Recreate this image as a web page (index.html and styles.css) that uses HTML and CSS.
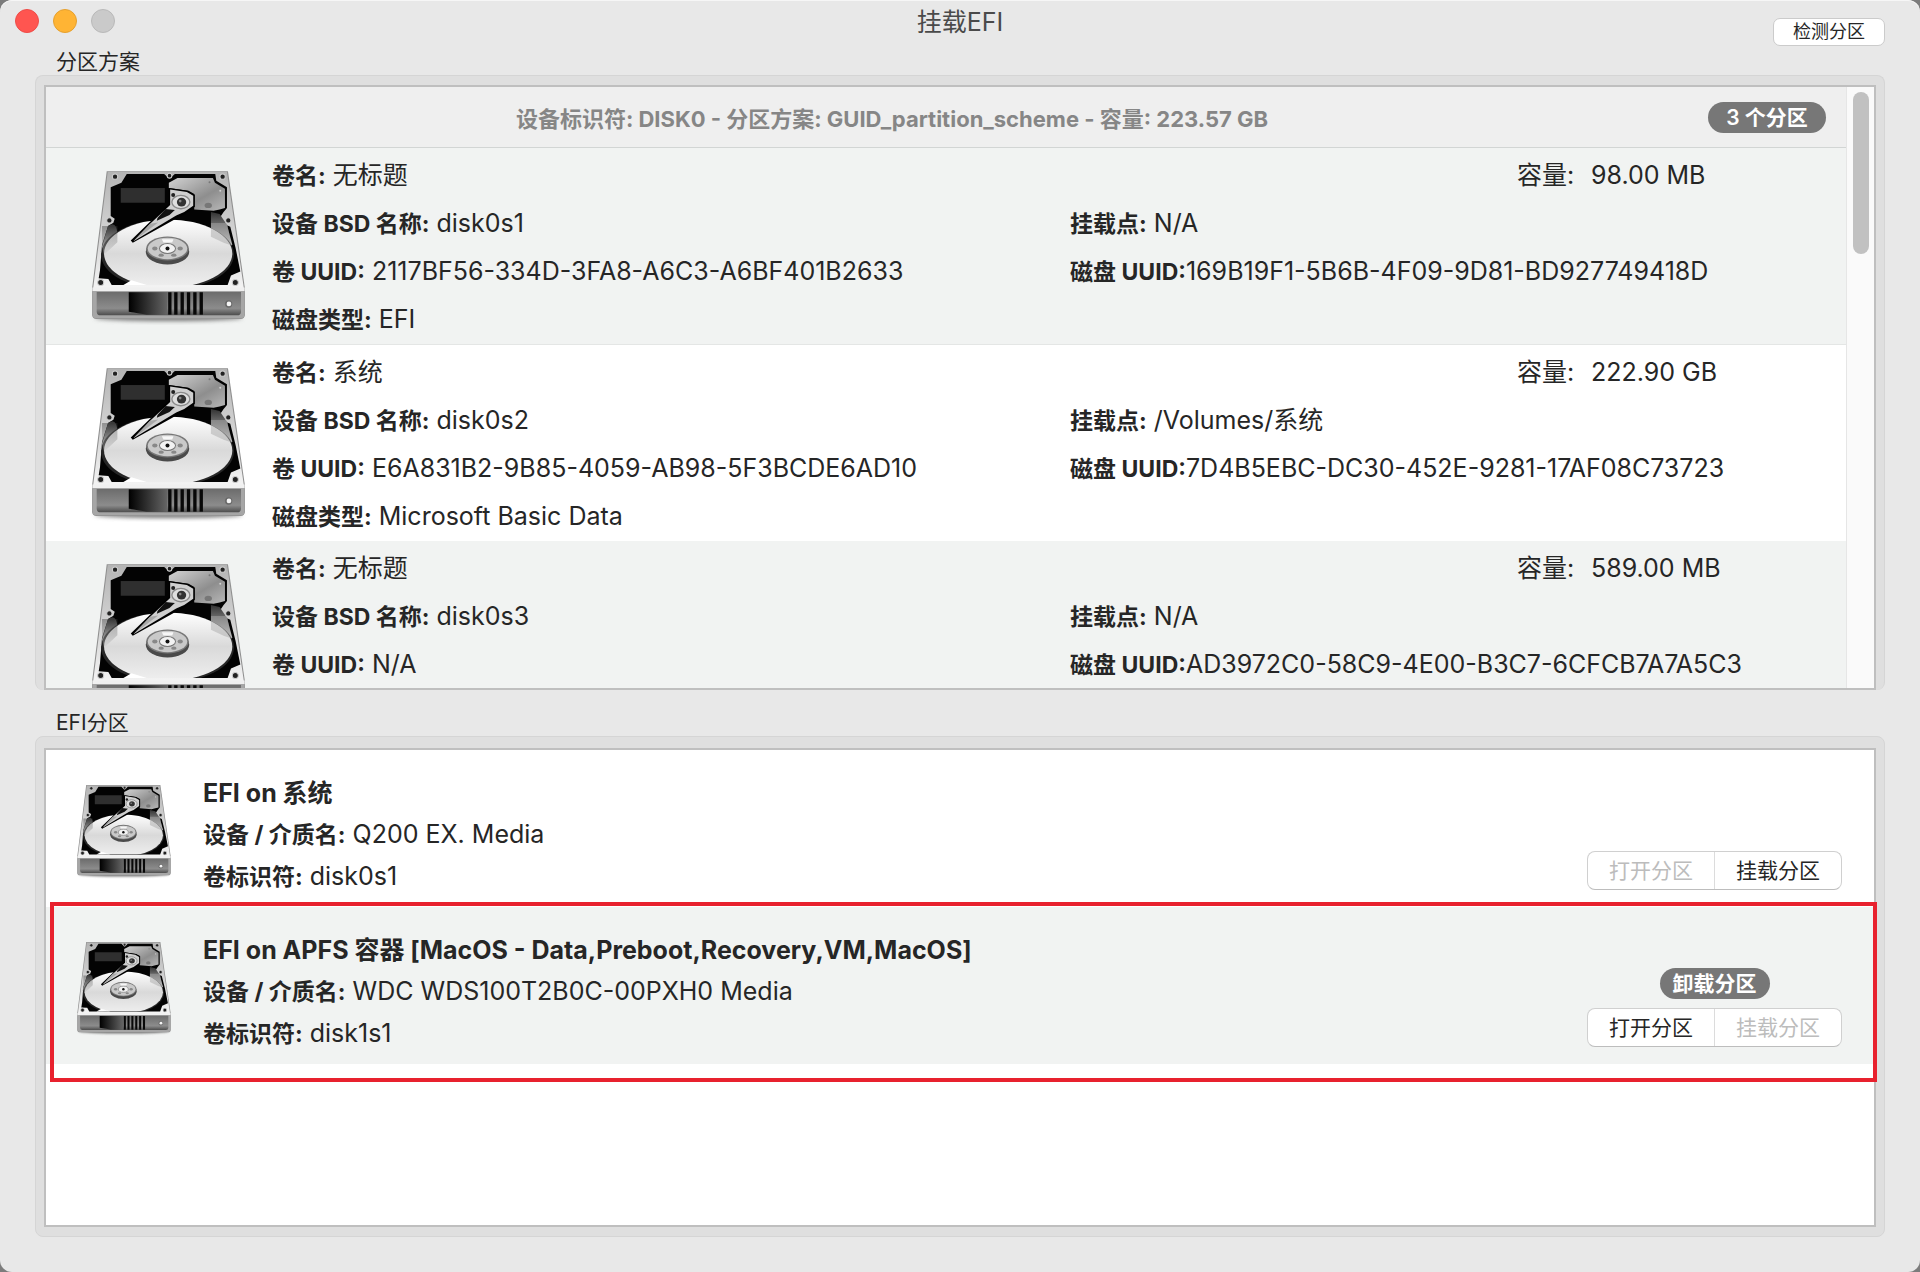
FILE: index.html
```html
<!DOCTYPE html>
<html lang="zh-CN">
<head>
  <meta charset="UTF-8">
  <meta name="viewport" content="width=device-width, initial-scale=1.0">
  <title>挂载EFI</title>
  <link rel="stylesheet" href="styles.css">
</head>
<body>

<!-- hard drive icon, shared by both lists -->
<svg class="defs" aria-hidden="true">
  <defs>
    <linearGradient id="case" x1="0" y1="0" x2="0" y2="1">
      <stop offset="0" stop-color="#b4b4b4"/>
      <stop offset="0.6" stop-color="#d8d8d8"/>
      <stop offset="1" stop-color="#f4f4f4"/>
    </linearGradient>
    <linearGradient id="front" x1="0" y1="0" x2="0" y2="1">
      <stop offset="0" stop-color="#6c6c6c"/>
      <stop offset="0.7" stop-color="#8c8c8c"/>
      <stop offset="1" stop-color="#4c4c4c"/>
    </linearGradient>
    <linearGradient id="plate" x1="0" y1="0" x2="1" y2="1">
      <stop offset="0" stop-color="#d2d2d2"/>
      <stop offset="0.6" stop-color="#8e8e8e"/>
      <stop offset="1" stop-color="#b8b8b8"/>
    </linearGradient>
    <linearGradient id="platter" x1="0" y1="0" x2="0" y2="1">
      <stop offset="0" stop-color="#ffffff"/>
      <stop offset="0.5" stop-color="#d9d9d9"/>
      <stop offset="1" stop-color="#efefef"/>
    </linearGradient>
    <linearGradient id="slot" x1="0" y1="0" x2="1" y2="0">
      <stop offset="0" stop-color="#000000"/>
      <stop offset="1" stop-color="#666666"/>
    </linearGradient>
    <linearGradient id="shade" x1="0" y1="0" x2="0" y2="1">
      <stop offset="0" stop-color="#333333"/>
      <stop offset="1" stop-color="#d0d0d0"/>
    </linearGradient>
    <filter id="soft" x="-10%" y="-100%" width="120%" height="300%">
      <feGaussianBlur stdDeviation="6"/>
    </filter>
    <clipPath id="well">
      <path d="M140 58H252L268 72L284 58H405L408 78L440 98V170L450 205L466 280L480 362L452 366L442 390H95L85 372L56 370L66 270L84 214L100 200L92 184V98Z"/>
    </clipPath>
    <symbol id="drive" viewBox="30 40 470 470">
      <ellipse cx="265" cy="488" rx="220" ry="10" fill="#777777" filter="url(#soft)"/>
      <path d="M80 50H443L494 402V478Q494 492 480 492H50Q36 492 36 478V402Z" fill="#8f8f8f"/>
      <path d="M83 52H440L491 403H39Z" fill="url(#case)"/>
      <path d="M140 58H252L268 72L284 58H405L408 78L440 98V160L430 172L418 190L428 206L450 216L466 280L480 350L452 362L442 390H95L85 372L56 370L60 345L66 270L84 214L100 204L104 192L92 184V98L124 84Z" fill="#030303"/>
      <rect x="122" y="100" width="132" height="44" fill="#2f2f2f"/>
      <path d="M292 70H398L404 84L434 102V160L418 164L400 168L342 164V118L325 108L266 100V84Z" fill="url(#plate)"/>
      <ellipse cx="384" cy="152" rx="11" ry="8" fill="#777777"/>
      <circle cx="388" cy="83" r="3" fill="#777777"/>
      <circle cx="420" cy="108" r="3" fill="#d0d0d0"/>
      <path d="M392 172L418 178L440 210L456 270L448 275L392 245Z" fill="url(#shade)"/>
      <path d="M84 214Q110 195 112 240L110 262L72 305L62 290Z" fill="url(#shade)"/>
      <g clip-path="url(#well)">
        <ellipse cx="262" cy="299" rx="199" ry="105" fill="#262626"/>
        <ellipse cx="264" cy="296" rx="192" ry="102" fill="url(#platter)"/>
      </g>
      <path d="M66 214H112V262L72 300L66 275Z" fill="url(#shade)" opacity="0.4"/>
      <path d="M392 205H440L454 272L430 264L392 246Z" fill="#aaaaaa" opacity="0.5"/>
      <!-- spindle -->
      <ellipse cx="262" cy="291" rx="65" ry="38" fill="#4a4a4a"/>
      <ellipse cx="262" cy="281" rx="64" ry="36" fill="#777777"/>
      <ellipse cx="262" cy="281" rx="59" ry="32" fill="#c9c9c9"/>
      <ellipse cx="262" cy="281" rx="24" ry="15" fill="#f2f2f2" stroke="#777777" stroke-width="3"/>
      <circle cx="262" cy="281" r="6" fill="#111111"/>
      <g fill="#888888">
        <ellipse cx="224" cy="281" rx="8" ry="6"/>
        <ellipse cx="300" cy="281" rx="8" ry="6"/>
        <ellipse cx="243" cy="301" rx="8" ry="5"/>
        <ellipse cx="281" cy="301" rx="8" ry="5"/>
      </g>
      <path d="M245 253H280L276 263H250Z" fill="#f7f7f7"/>
      <!-- arm -->
      <path d="M266 100L322 108L344 120V156L316 178L294 188L158 264L152 257L206 205L266 148Z" fill="#000000"/>
      <path d="M270 104L320 112L339 123V153L312 172L288 182L160 259L210 207L270 151Z" fill="#cfcfcf"/>
      <path d="M232 190L256 163L284 166L268 181L230 198Z" fill="#111111"/>
      <path d="M160 259L210 207L234 203Z" fill="#a8a8a8"/>
      <ellipse cx="302" cy="142" rx="27" ry="20" fill="#dedede" stroke="#8a8a8a" stroke-width="4"/>
      <ellipse cx="304" cy="142" rx="14" ry="13" fill="#333333"/>
      <circle cx="279" cy="121" r="6" fill="#222222"/>
      <circle cx="300" cy="139" r="4" fill="#888888"/>
      <!-- screws -->
      <g fill="#222222" stroke="#cfcfcf" stroke-width="3">
        <circle cx="105" cy="66" r="8"/>
        <circle cx="268" cy="63" r="7"/>
        <circle cx="427" cy="66" r="8"/>
        <circle cx="88" cy="197" r="8"/>
        <circle cx="444" cy="197" r="8"/>
        <circle cx="62" cy="383" r="9"/>
        <circle cx="465" cy="383" r="9"/>
      </g>
      <path d="M130 390L154 376L200 390Z" fill="#ffffff"/>
      <!-- front side -->
      <path d="M37 398H493V409H37Z" fill="#f0f0f0"/>
      <path d="M37 409H493V477Q493 490 480 490H50Q37 490 37 477Z" fill="#a6a6a6"/>
      <path d="M50 411H482V470Q482 481 470 481H62Q50 481 50 470Z" fill="url(#front)"/>
      <path d="M146 412H262V479H200Q150 470 146 470Z" fill="url(#slot)"/>
      <g fill="#080808">
        <rect x="264" y="412" width="10" height="67"/>
        <rect x="282" y="412" width="10" height="67"/>
        <rect x="301" y="412" width="10" height="67"/>
        <rect x="320" y="412" width="10" height="67"/>
        <rect x="339" y="412" width="10" height="67"/>
        <rect x="358" y="412" width="10" height="67"/>
      </g>
      <circle cx="445" cy="447" r="11" fill="#6a6a6a"/>
      <circle cx="446" cy="447" r="7" fill="#f5f5f5"/>
    </symbol>
  </defs>
</svg>

<div class="window">
  <header class="titlebar">
    <div class="lights">
      <span class="light close"></span>
      <span class="light minimize"></span>
      <span class="light zoom"></span>
    </div>
    <h1>挂载EFI</h1>
    <button class="detect">检测分区</button>
  </header>

  <h2>分区方案</h2>
  <section class="group schemes">
    <div class="panel">
      <div class="list">
        <div class="list-header">
          <div class="scheme-title">设备标识符: DISK0 - 分区方案: GUID_partition_scheme - 容量: 223.57 GB</div>
          <span class="badge count">3 个分区</span>
        </div>

        <article class="volume">
          <svg class="icon"><use href="#drive"/></svg>
          <div class="info">
            <p><b>卷名:</b> 无标题</p>
            <p class="size"><span>容量:</span>98.00 MB</p>
            <p><b>设备 BSD 名称:</b> disk0s1</p>
            <p><b>挂载点:</b> N/A</p>
            <p><b>卷 UUID:</b> 2117BF56-334D-3FA8-A6C3-A6BF401B2633</p>
            <p><b>磁盘 UUID:</b>169B19F1-5B6B-4F09-9D81-BD927749418D</p>
            <p><b>磁盘类型:</b> EFI</p>
          </div>
        </article>

        <article class="volume">
          <svg class="icon"><use href="#drive"/></svg>
          <div class="info">
            <p><b>卷名:</b> 系统</p>
            <p class="size"><span>容量:</span>222.90 GB</p>
            <p><b>设备 BSD 名称:</b> disk0s2</p>
            <p><b>挂载点:</b> /Volumes/系统</p>
            <p><b>卷 UUID:</b> E6A831B2-9B85-4059-AB98-5F3BCDE6AD10</p>
            <p><b>磁盘 UUID:</b>7D4B5EBC-DC30-452E-9281-17AF08C73723</p>
            <p><b>磁盘类型:</b> Microsoft Basic Data</p>
          </div>
        </article>

        <article class="volume">
          <svg class="icon"><use href="#drive"/></svg>
          <div class="info">
            <p><b>卷名:</b> 无标题</p>
            <p class="size"><span>容量:</span>589.00 MB</p>
            <p><b>设备 BSD 名称:</b> disk0s3</p>
            <p><b>挂载点:</b> N/A</p>
            <p><b>卷 UUID:</b> N/A</p>
            <p><b>磁盘 UUID:</b>AD3972C0-58C9-4E00-B3C7-6CFCB7A7A5C3</p>
          </div>
        </article>
      </div>
      <div class="scrollbar"><div class="thumb"></div></div>
    </div>
  </section>

  <h2 class="second">EFI分区</h2>
  <section class="group efi">
    <div class="panel">
      <div class="efi-list">
        <article class="efi-row">
          <svg class="icon"><use href="#drive"/></svg>
          <div class="efi-info">
            <p class="name">EFI on 系统</p>
            <p><b>设备 / 介质名:</b> Q200 EX. Media</p>
            <p><b>卷标识符:</b> disk0s1</p>
          </div>
          <div class="actions">
            <div class="segmented">
              <button disabled>打开分区</button>
              <button>挂载分区</button>
            </div>
          </div>
        </article>

        <article class="efi-row marked">
          <svg class="icon"><use href="#drive"/></svg>
          <div class="efi-info">
            <p class="name">EFI on APFS 容器 [MacOS - Data,Preboot,Recovery,VM,MacOS]</p>
            <p><b>设备 / 介质名:</b> WDC WDS100T2B0C-00PXH0 Media</p>
            <p><b>卷标识符:</b> disk1s1</p>
          </div>
          <div class="actions">
            <button class="badge unmount">卸载分区</button>
            <div class="segmented">
              <button>打开分区</button>
              <button disabled>挂载分区</button>
            </div>
          </div>
        </article>
      </div>
    </div>
  </section>
</div>

</body>
</html>
```

FILE: styles.css
```css
* {
  box-sizing: border-box;
}

body {
  margin: 0;
  background-color: #7c7c7c;
  color: #262626;
  font-family: Inter, "Noto Sans CJK SC", sans-serif;
  font-size: 25px;
}

h1, h2, p {
  margin: 0;
  font-weight: normal;
}

button {
  font-family: inherit;
  color: #262626;
  padding: 0;
  border: none;
}

b {
  font-size: 23px;
  font-weight: 700;
}

.defs {
  position: absolute;
  width: 0;
  height: 0;
}

.window {
  height: 100vh;
  display: flex;
  flex-direction: column;
  padding: 0 35px 35px;
  background-color: #e8e8e8;
  border-radius: 12px;
  box-shadow: inset 0 1px 0 #f6f6f6;
}

/* title bar */
.titlebar {
  display: grid;
  grid-template-columns: 1fr auto 1fr;
  height: 46px;
  flex: none;
}

.lights {
  display: flex;
  gap: 14px;
  margin-left: -20px;
  padding-top: 9px;
}

.light {
  width: 24px;
  height: 24px;
  border-radius: 50%;
  border: 1px solid;
}

.close {
  background-color: #ff5550;
  border-color: #ee4c48;
}

.minimize {
  background-color: #ffb434;
  border-color: #e5a02f;
}

.zoom {
  background-color: #cacaca;
  border-color: #b9b9b9;
}

h1 {
  font-size: 25px;
  line-height: 44px;
  color: #4a4a4a;
}

.detect {
  justify-self: end;
  align-self: end;
  width: 112px;
  height: 28px;
  font-size: 18px;
  line-height: 26px;
  background-color: #fff;
  border: 1px solid #cbcbcb;
  border-radius: 7px;
}

h2 {
  flex: none;
  font-size: 21px;
  line-height: 26px;
  padding: 3px 0 0 21px;
}

h2.second {
  padding-top: 20px;
}

/* boxes */
.group {
  min-height: 0;
  background-color: #dfdfdf;
  border: 1px solid #d5d5d5;
  border-radius: 8px;
}

.schemes {
  flex: 605 1 0;
  padding: 9px 8px 0;
  border-bottom: none;
}

.efi {
  flex: 479 1 0;
  padding: 11px 8px 9px;
}

.panel {
  display: flex;
  height: 100%;
  background-color: #fff;
  border: 2px solid #bfbfbf;
}

/* partition scheme list */
.list {
  flex: 1;
  overflow: hidden;
}

.list-header {
  display: flex;
  align-items: center;
  height: 61px;
  padding: 0 20px 0 30px;
  background-color: #efefef;
  border-bottom: 1px solid #d2d5d4;
}

.scheme-title {
  flex: 1;
  text-align: center;
  font-size: 22px;
  font-weight: 700;
  color: #868686;
}

.badge {
  height: 31px;
  line-height: 31px;
  font-size: 21px;
  font-weight: 600;
  text-align: center;
  color: #fff;
  background-color: #777;
  border-radius: 16px;
}

.count {
  width: 118px;
}

.volume {
  display: flex;
  height: 196px;
  padding-left: 44px;
  gap: 25px;
}

.volume:nth-child(even) {
  height: 197px;
  background-color: #f1f3f2;
  border-bottom: 1px solid #e4e6e5;
}

.volume .icon {
  flex: none;
  width: 157px;
  height: 157px;
  margin-top: 20px;
}

.info {
  flex: 1;
  display: grid;
  grid-template-columns: 36fr 35fr;
  grid-auto-rows: 48px;
  padding-top: 3px;
  line-height: 48px;
  white-space: nowrap;
}

.size {
  display: flex;
  justify-self: end;
  width: 329px;
}

.size span {
  width: 74px;
}

.scrollbar {
  width: 28px;
  padding: 5px 5px 0 6px;
  background-color: #fafafa;
  border-left: 1px solid #e6e6e6;
}

.thumb {
  width: 16px;
  height: 162px;
  background-color: #c1c1c1;
  border-radius: 8px;
}

/* efi list */
.efi-list {
  flex: 1;
}

.efi-row {
  display: flex;
  height: 157px;
  padding: 0 32px 17px 30px;
}

.efi-row .icon {
  flex: none;
  width: 96px;
  height: 96px;
  margin: 33px 31px 0 0;
}

.efi-info {
  flex: 1;
  padding-top: 23px;
  line-height: 41px;
  white-space: nowrap;
}

.name {
  font-weight: 700;
}

.actions {
  display: flex;
  flex-direction: column;
  justify-content: flex-end;
  align-items: center;
  gap: 9px;
}

.segmented {
  display: flex;
  height: 39px;
  background-color: #fff;
  border: 1px solid #d0d0d0;
  border-bottom-color: #bdbdbd;
  border-radius: 8px;
}

.segmented button {
  width: 126px;
  font-size: 21px;
  line-height: 36px;
  background: none;
}

.segmented button + button {
  width: 127px;
  border-left: 1px solid #dcdcdc;
}

.segmented button:disabled {
  color: #bcbcbc;
}

.unmount {
  width: 110px;
}

/* highlighted row with a red frame over it */
.marked {
  position: relative;
  background-color: #f1f3f2;
}

.marked::after {
  content: "";
  position: absolute;
  top: -5px;
  right: -3px;
  bottom: -18px;
  left: 4px;
  border: 4px solid #e8212e;
}
```
